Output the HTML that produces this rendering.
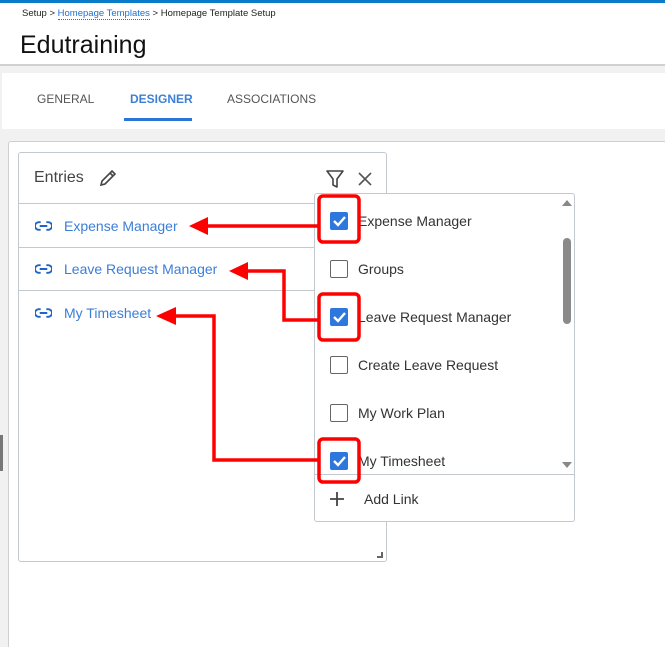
<!DOCTYPE html>
<html style="width:665px;height:647px;overflow:hidden"><head><style>
*{box-sizing:border-box;margin:0;padding:0}
body{width:665px;height:647px;overflow:hidden;background:#fff;font-family:"Liberation Sans",sans-serif;position:relative}
.abs{position:absolute}
.t{white-space:nowrap}
</style></head><body>
<div class="abs" style="left:0;top:0;width:665px;height:3px;background:#0a7bc8"></div>
<div class="abs t" style="left:22px;top:8px;font-size:9.5px;color:#222">Setup &gt; <span style="color:#1e6fd0;border-bottom:1px dotted #1e6fd0">Homepage Templates</span> &gt; Homepage Template Setup</div>
<div class="abs t" style="left:20px;top:31px;font-size:25px;color:#111">Edutraining</div>
<div class="abs" style="left:0;top:64px;width:665px;height:2px;background:#d0d0d0"></div>
<div class="abs" style="left:0;top:66px;width:665px;height:581px;background:#f1f1f1"></div>
<div class="abs" style="left:2px;top:73px;width:663px;height:56px;background:#fff"></div>
<div class="abs t" style="left:37px;top:92px;font-size:12px;color:#555">GENERAL</div>
<div class="abs t" style="left:130px;top:92px;font-size:12px;color:#3d7fd6;font-weight:bold">DESIGNER</div>
<div class="abs" style="left:124px;top:118px;width:68px;height:3px;background:#2b74d8"></div>
<div class="abs t" style="left:227px;top:92px;font-size:12px;color:#555">ASSOCIATIONS</div>
<div class="abs" style="left:8px;top:141px;width:657px;height:506px;background:#fff;border:1px solid #d0d0d0;border-bottom:none;border-right:none;border-radius:3px 0 0 0"></div>
<div class="abs" style="left:0;top:435px;width:3px;height:36px;background:#777"></div>
<div class="abs" style="left:18px;top:152px;width:369px;height:410px;background:#fff;border:1px solid #c4c9d0;border-radius:3px"></div>
<div class="abs t" style="left:34px;top:169px;font-size:16px;color:#444">Entries</div>
<svg class="abs" style="left:98px;top:168px" width="20" height="20" viewBox="0 0 20 20"><path d="M3 17l1-4L14 3l3 3L7 16zM12 5l3 3" fill="none" stroke="#444" stroke-width="1.6"/></svg>
<svg class="abs" style="left:325px;top:169px" width="20" height="20" viewBox="0 0 20 20"><path d="M2 2h16l-6 8v8l-4-2v-6z" fill="none" stroke="#444" stroke-width="1.6" stroke-linejoin="round"/></svg>
<svg class="abs" style="left:357px;top:171px" width="16" height="16" viewBox="0 0 16 16"><path d="M2 2l12 12M14 2L2 14" stroke="#555" stroke-width="1.6"/></svg>
<div class="abs" style="left:19px;top:203px;width:300px;height:1px;background:#c4c9d0"></div>
<div class="abs" style="left:19px;top:247px;width:300px;height:1px;background:#c4c9d0"></div>
<div class="abs" style="left:19px;top:290px;width:300px;height:1px;background:#c4c9d0"></div>
<svg width="0" height="0" style="position:absolute"><defs><symbol id="lk" viewBox="0 0 18 10"><path d="M6 1H4a4 4 0 000 8h2M12 1h2a4 4 0 010 8h-2M5 5h8" fill="none" stroke="#1f65c7" stroke-width="2"/></symbol></defs></svg>
<svg class="abs" style="left:35px;top:221px" width="17" height="10"><use href="#lk"/></svg>
<svg class="abs" style="left:35px;top:264px" width="17" height="10"><use href="#lk"/></svg>
<svg class="abs" style="left:35px;top:308px" width="17" height="10"><use href="#lk"/></svg>
<div class="abs t" style="left:64px;top:218px;font-size:14px;color:#3a7ed8">Expense Manager</div>
<div class="abs t" style="left:64px;top:261px;font-size:14px;color:#3a7ed8">Leave Request Manager</div>
<div class="abs t" style="left:64px;top:305px;font-size:14px;color:#3a7ed8">My Timesheet</div>
<svg class="abs" style="left:377px;top:552px" width="6" height="6"><path d="M5 0v5H0" fill="none" stroke="#666" stroke-width="2"/></svg>
<div class="abs" style="left:314px;top:193px;width:261px;height:329px;background:#fff;border:1px solid #c4c9d0;border-radius:3px"></div>
<div class="abs" style="left:315px;top:474px;width:259px;height:1px;background:#c4c9d0"></div>
<svg class="abs" style="left:561px;top:198px" width="12" height="272"><path d="M1 8l5-6 5 6z M1 264l5 6 5-6z" fill="#888"/><rect x="2" y="40" width="8" height="86" rx="4" fill="#8a8a8a"/></svg>
<div class="abs t" style="left:358px;top:213px;font-size:14px;color:#333">Expense Manager</div>
<div class="abs t" style="left:358px;top:261px;font-size:14px;color:#333">Groups</div>
<div class="abs t" style="left:358px;top:309px;font-size:14px;color:#333">Leave Request Manager</div>
<div class="abs t" style="left:358px;top:357px;font-size:14px;color:#333">Create Leave Request</div>
<div class="abs t" style="left:358px;top:405px;font-size:14px;color:#333">My Work Plan</div>
<div class="abs t" style="left:358px;top:453px;font-size:14px;color:#333">My Timesheet</div>
<div class="abs" style="left:330px;top:260px;width:18px;height:18px;border:1.5px solid #666;border-radius:2px"></div>
<div class="abs" style="left:330px;top:356px;width:18px;height:18px;border:1.5px solid #666;border-radius:2px"></div>
<div class="abs" style="left:330px;top:404px;width:18px;height:18px;border:1.5px solid #666;border-radius:2px"></div>
<svg class="abs" style="left:0;top:0" width="665" height="647">
<g fill="#2e78dd"><rect x="330" y="212" width="18" height="18" rx="2"/><rect x="330" y="308" width="18" height="18" rx="2"/><rect x="330" y="452" width="18" height="18" rx="2"/></g>
<g fill="none" stroke="#fff" stroke-width="2.4"><path d="M334 221l4 4 7-8"/><path d="M334 317l4 4 7-8"/><path d="M334 461l4 4 7-8"/></g>
<g fill="none" stroke="#f00" stroke-width="3.5"><rect x="319" y="196" width="40" height="46" rx="4"/><rect x="319" y="294" width="40" height="46" rx="4"/><rect x="319" y="439" width="40" height="43" rx="4"/></g>
<g fill="none" stroke="#f00" stroke-width="3.5"><path d="M318 226H205"/><path d="M318 320H284V271H245"/><path d="M318 460H214V316H175"/></g>
<g fill="#f00"><path d="M189 226l19-9v18z"/><path d="M229 271l19-9v18z"/><path d="M156 316l20-9v18z"/></g>
</svg>
<svg class="abs" style="left:329px;top:491px" width="16" height="16"><path d="M8 1v14M1 8h14" stroke="#444" stroke-width="1.8"/></svg>
<div class="abs t" style="left:364px;top:491px;font-size:14px;color:#333">Add Link</div>
</body></html>
